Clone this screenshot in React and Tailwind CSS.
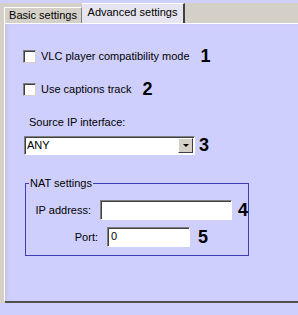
import React from "react";

const lav = "bg-[#cfcffd]";

function Check({ label, num }) {
  return (
    <div className="flex items-center h-[13px]">
      <div className="w-[13px] h-[13px] bg-white border border-t-[#808080] border-l-[#808080] border-r-[#d4d0c8] border-b-[#d4d0c8] shadow-[inset_1px_1px_0_#404040]" />
      <span className="ml-[5px] text-[11px] leading-[13px] text-black">{label}</span>
      <span className="ml-[11px] text-[18px] font-bold leading-[13px] text-black">{num}</span>
    </div>
  );
}

function Field({ width, value }) {
  return (
    <div
      className={`${width} h-[20px] bg-white border border-t-[#808080] border-l-[#808080] border-r-white border-b-white shadow-[inset_1px_1px_0_#404040] text-[11px] leading-[17px] pl-[3px] text-black`}>
      {value}
    </div>
  );
}

export default function App() {
  return (
    <div className="w-[298px] h-[315px] overflow-hidden bg-[#d4d0c8] font-['Liberation_Sans',Arial,sans-serif] flex flex-col">
      {/* tabs */}
      <div className="h-[23px] flex items-end pl-[4px] border-t-[3px] border-[#cfcffd] box-border">
        <div className="w-[78px] h-[16px] border-t border-l border-white border-r border-r-[#808080] text-[11px] leading-[15px] text-center text-black">
          Basic settings
        </div>
        <div className="w-[103px] h-[20px] bg-[#e6e4ee] border-t border-white border-r-2 border-r-[#404040] text-[11px] leading-[16px] text-center text-black">
          Advanced settings
        </div>
      </div>

      {/* panel */}
      <div className="flex flex-1 pl-[4px]">
        <div className={`flex-1 border-l border-t border-white ${lav} shadow-[inset_3px_0_3px_-1px_#c4c2d4] pl-[18px] pt-[26px]`}>
          <Check label="VLC player compatibility mode" num="1" />
          <div className="mt-[20px]">
            <Check label="Use captions track" num="2" />
          </div>

          <div className="mt-[20px] pl-[6px] text-[11px] leading-[13px] text-black">
            Source IP interface:
          </div>
          <div className="mt-[7px] flex items-center">
            <div className="w-[171px] h-[19px] ml-[1px] bg-white border border-t-[#808080] border-l-[#808080] border-r-white border-b-white shadow-[inset_1px_1px_0_#404040] flex items-center">
              <span className="flex-1 pl-[2px] text-[11px] leading-[13px] text-black">ANY</span>
              <div className="w-[15px] h-[15px] mr-[1px] bg-[#d4d0c8] border border-t-white border-l-white border-r-[#404040] border-b-[#404040] flex items-center justify-center">
                <div className="w-0 h-0 border-l-[3px] border-r-[3px] border-t-[3px] border-l-transparent border-r-transparent border-t-black" />
              </div>
            </div>
            <span className="ml-[4px] text-[18px] font-bold leading-[17px] text-black">3</span>
          </div>

          {/* NAT group */}
          <div className="mt-[28px] ml-[2px] w-[224px] h-[73px] border border-[#3f3fb0] relative">
            <span className={`absolute left-[3px] top-[-8px] px-[1px] ${lav} text-[11px] leading-[14px] text-black`}>
              NAT settings
            </span>
            <div className="mt-[16px] flex items-center">
              <span className="w-[72px] text-right text-[11px] leading-[13px] text-black">IP address:</span>
              <div className="ml-[9px]">
                <Field width="w-[132px]" value="" />
              </div>
              <span className="ml-[6px] text-[18px] font-bold leading-[17px] text-black">4</span>
            </div>
            <div className="mt-[7px] flex items-center">
              <span className="w-[72px] text-right text-[11px] leading-[13px] text-black">Port:</span>
              <div className="ml-[9px]">
                <Field width="w-[83px]" value="0" />
              </div>
              <span className="ml-[8px] text-[18px] font-bold leading-[17px] text-black">5</span>
            </div>
          </div>
        </div>
      </div>

      {/* bottom */}
      <div className="h-[2px] bg-[#505050] ml-[5px]" />
      <div className={`h-[12px] ${lav}`} />
    </div>
  );
}
